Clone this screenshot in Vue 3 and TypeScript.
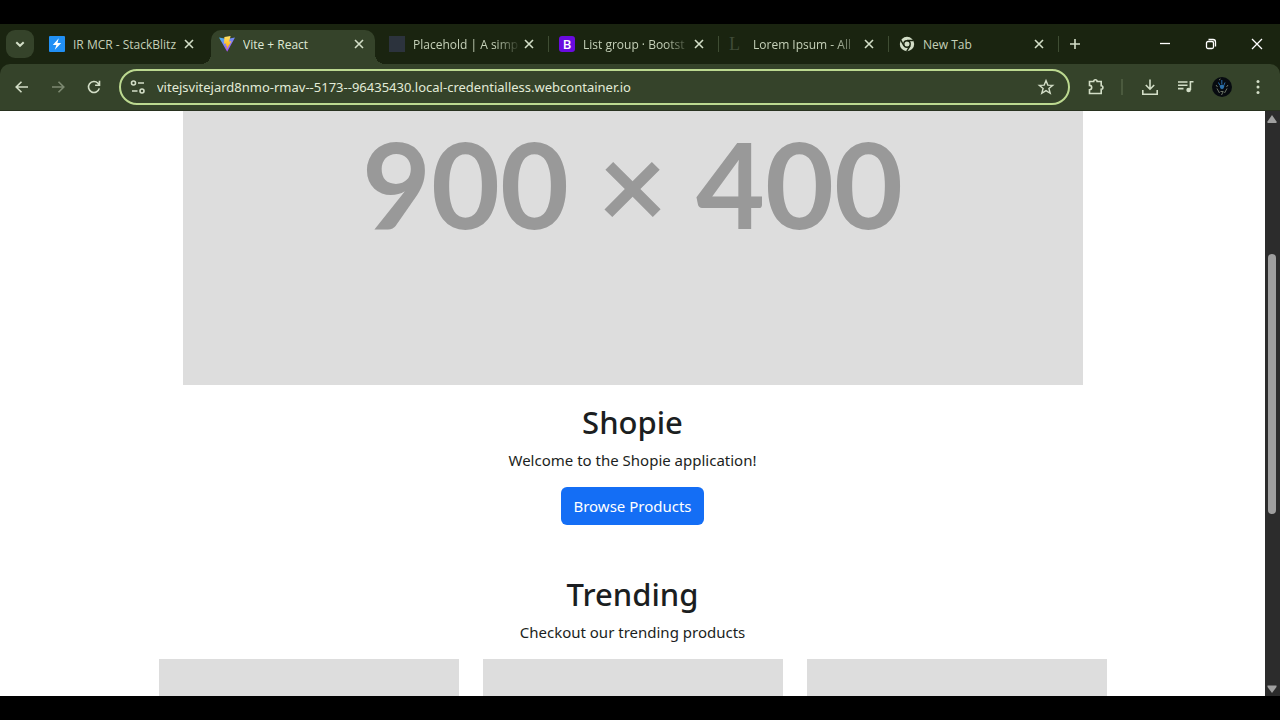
<script setup lang="ts">
import { ref } from 'vue'

interface Tab {
  title: string
  icon: 'bolt' | 'vite' | 'square' | 'bootstrap' | 'lorem' | 'chrome'
  active?: boolean
  divider?: boolean
  faded?: boolean
}

const tabs: Tab[] = [
  { title: 'IR MCR - StackBlitz', icon: 'bolt' },
  { title: 'Vite + React', icon: 'vite', active: true },
  { title: 'Placehold | A simp', icon: 'square', divider: true, faded: true },
  { title: 'List group · Bootst', icon: 'bootstrap', divider: true, faded: true },
  { title: 'Lorem Ipsum - All', icon: 'lorem', divider: true, faded: true },
  { title: 'New Tab', icon: 'chrome', divider: true },
]

const address = ref('vitejsvitejard8nmo-rmav--5173--96435430.local-credentialless.webcontainer.io')
const cards = [1, 2, 3]
</script>

<template>
  <div class="screen">
    <div class="browser">
      <header class="tabstrip">
        <button class="tab-search" aria-label="Search tabs">
          <svg width="16" height="16" viewBox="0 0 16 16"><path d="M4.3 6.2 8 9.8l3.7-3.6" class="line bold" /></svg>
        </button>
        <div class="tabs" role="tablist">
          <div v-for="tab in tabs" :key="tab.title" class="tab" :class="{ active: tab.active, divider: tab.divider }" role="tab" :aria-selected="!!tab.active">
            <svg v-if="tab.icon === 'bolt'" class="fav" viewBox="0 0 16 16">
              <rect width="16" height="16" rx="1" fill="#2190f5" />
              <path d="M9.8 2.2 3.8 9h3.6l-1.6 4.8L12.2 7H8.4z" fill="#fff" />
            </svg>
            <svg v-else-if="tab.icon === 'vite'" class="fav" viewBox="0 0 16 16">
              <defs>
                <linearGradient id="vite-body" x1="0" y1="0" x2="0.6" y2="1">
                  <stop offset="0" stop-color="#41b8f5" />
                  <stop offset="1" stop-color="#b14cf5" />
                </linearGradient>
                <linearGradient id="vite-bolt" x1="0" y1="0" x2="0" y2="1">
                  <stop offset="0" stop-color="#ffe46a" />
                  <stop offset="1" stop-color="#ffa800" />
                </linearGradient>
              </defs>
              <path d="M0 1.6 8 3l8-1.4L8.2 15.8z" fill="url(#vite-body)" />
              <path d="M11.6 0 5.4 1.1 5 7.8l2.2-.4-.6 2.6 1.5-.4-.6 3.8L12.5 5.2l-2.4.4L11.6 0z" fill="url(#vite-bolt)" />
            </svg>
            <svg v-else-if="tab.icon === 'square'" class="fav" viewBox="0 0 16 16"><rect width="16" height="16" fill="#2c333d" /></svg>
            <span v-else-if="tab.icon === 'bootstrap'" class="fav bs">B</span>
            <span v-else-if="tab.icon === 'lorem'" class="fav lorem">L</span>
            <svg v-else class="fav" viewBox="0 0 16 16">
              <circle cx="8" cy="8" r="7.2" fill="#d3dec7" />
              <circle cx="8" cy="8" r="3.2" fill="#d3dec7" stroke="#1a2410" stroke-width="1.4" />
              <path d="M8 4.5h6.4M5 9.8 1.8 4.2M11 9.8l-3.2 5.4" stroke="#1a2410" stroke-width="1.4" />
            </svg>
            <span class="title" :class="{ faded: tab.faded }">{{ tab.title }}</span>
            <button class="close" aria-label="Close tab">
              <svg width="16" height="16" viewBox="0 0 16 16"><path d="m4 4 8 8M12 4l-8 8" class="line" /></svg>
            </button>
          </div>
        </div>
        <button class="new-tab" aria-label="New tab">
          <svg width="16" height="16" viewBox="0 0 16 16"><path d="M8 3v10M3 8h10" class="line" /></svg>
        </button>
        <div class="window-controls">
          <button aria-label="Minimize"><svg width="16" height="16" viewBox="0 0 16 16"><path d="M3 7.5h10" class="white" /></svg></button>
          <button aria-label="Restore">
            <svg width="16" height="16" viewBox="0 0 16 16">
              <rect x="3.5" y="5.5" width="7" height="7" rx="1.5" class="white" />
              <path d="M5.5 3.5H10a2.5 2.5 0 0 1 2.5 2.5v4.5" class="white" />
            </svg>
          </button>
          <button aria-label="Close"><svg width="16" height="16" viewBox="0 0 16 16"><path d="m3 3 10 10M13 3 3 13" class="white" /></svg></button>
        </div>
      </header>

      <div class="toolbar">
        <button class="tool" aria-label="Back"><svg width="18" height="18" viewBox="0 0 18 18"><path d="M15 9H3.5M8.5 3.7 3.2 9l5.3 5.3" class="line" /></svg></button>
        <button class="tool dim" aria-label="Forward" disabled><svg width="18" height="18" viewBox="0 0 18 18"><path d="M3 9h11.5M9.5 3.7 14.8 9l-5.3 5.3" class="line" /></svg></button>
        <button class="tool" aria-label="Reload">
          <svg width="18" height="18" viewBox="0 0 18 18"><path d="M14.3 10.4A5.5 5.5 0 1 1 13 5.2L14.3 6.7M14.5 2.8v4.4h-4.4" class="line" /></svg>
        </button>
        <div class="omnibox">
          <svg width="18" height="18" viewBox="0 0 18 18" aria-hidden="true">
            <circle cx="4.5" cy="5" r="2" class="line" /><path d="M9 5h6M3 13h5.5" class="line" /><circle cx="13" cy="13" r="2" class="line" />
          </svg>
          <input v-model="address" type="text" aria-label="Address and search bar" spellcheck="false" />
          <button class="star" aria-label="Bookmark this tab">
            <svg width="18" height="18" viewBox="0 0 18 18"><path d="m9 2.6 1.8 4.5 4.9.3-3.8 3.1 1.3 4.8L9 12.6l-4.2 2.7 1.3-4.8-3.8-3.1 4.9-.3z" class="line thin" /></svg>
          </button>
        </div>
        <button class="tool" aria-label="Extensions">
          <svg width="18" height="18" viewBox="0 0 18 18"><path d="M2.5 3.5h4.2a1.7 1.7 0 0 1 3.4 0h4.1v4.3a1.7 1.7 0 0 1 0 3.4v4.3H2.5v-3.7a2.2 2.2 0 0 0 0-4.4z" class="line" /></svg>
        </button>
        <span class="separator"></span>
        <button class="tool" aria-label="Downloads">
          <svg width="18" height="18" viewBox="0 0 18 18"><path d="M9 1.5v9.3M4.8 7 9 11.2 13.2 7M1.8 12v4.2h14.4V12" class="line" /></svg>
        </button>
        <button class="tool" aria-label="Media controls">
          <svg width="18" height="18" viewBox="0 0 18 18"><path d="M1 4h9.5M1 7.3h9.5M1 10.6h5.5M13.4 12V3.7h3.1" class="line" /><circle cx="11.6" cy="12" r="2.3" fill="#d3dec7" /></svg>
        </button>
        <button class="tool" aria-label="Profile">
          <svg width="20" height="20" viewBox="0 0 20 20">
            <circle cx="10" cy="10" r="10" fill="#070b10" />
            <path d="M9.8 3v4M6.5 5.5l1.2 2.5M13 5.5l-1 2.5" stroke="#286ba8" fill="none" />
            <path d="M7.5 8.6 10 7.5l2.5 1.1-.8 2.6-1.7 1-1.7-1z" fill="#2b6fa8" />
            <path d="M5 11.5 7.5 16M15 11.5 12.5 16M8.5 14.5h3M9.5 18l1.5-3M4 8l1.5 2M16 8l-1.5 2M7 3l1.5-1" stroke="#6d7566" fill="none" />
          </svg>
        </button>
        <button class="tool" aria-label="Menu">
          <svg width="18" height="18" viewBox="0 0 18 18" fill="#d3dec7"><circle cx="9" cy="3.6" r="1.5" /><circle cx="9" cy="9" r="1.5" /><circle cx="9" cy="14.4" r="1.5" /></svg>
        </button>
      </div>

      <div class="viewport">
        <main class="page">
          <div class="hero" role="img" aria-label="900 × 400">900 × 400</div>
          <section class="intro">
            <h2>Shopie</h2>
            <p>Welcome to the Shopie application!</p>
            <button class="primary">Browse Products</button>
          </section>
          <section class="trending">
            <h2>Trending</h2>
            <p>Checkout our trending products</p>
            <div class="cards"><div v-for="card in cards" :key="card" class="card"></div></div>
          </section>
        </main>
        <div class="scrollbar" aria-hidden="true">
          <svg width="15" height="16" viewBox="0 0 15 16"><path d="M7 4 11.5 10.5v1.5h-9v-1.5z" /></svg>
          <div class="track"><div class="thumb"></div></div>
          <svg width="15" height="16" viewBox="0 0 15 16"><path d="M7 13 2.5 7V5.5h9V7z" /></svg>
        </div>
      </div>
    </div>
  </div>
</template>

<style>
body {
  margin: 0;
  background: #000;
}
</style>

<style scoped>
.screen {
  box-sizing: border-box;
  height: 100vh;
  padding: 24px 0;
  background: #000;
  font-family: 'Noto Sans', 'Open Sans', sans-serif;
  overflow: hidden;
}
.browser {
  display: flex;
  flex-direction: column;
  height: 100%;
  background: #1a2410;
}
button {
  display: inline-flex;
  align-items: center;
  justify-content: center;
  flex: none;
  padding: 0;
  border: 0;
  background: none;
  font: inherit;
}
svg {
  flex: none;
}
.line {
  fill: none;
  stroke: #d3dec7;
  stroke-width: 1.6;
}
.bold {
  stroke-width: 2;
}
.thin {
  stroke-width: 1.4;
}
.white {
  fill: none;
  stroke: #fff;
  stroke-width: 1.3;
}
.tabstrip {
  display: flex;
  align-items: center;
  height: 40px;
  padding-left: 6px;
}
.tab-search {
  width: 28px;
  height: 28px;
  border-radius: 9px;
  background: #35432a;
}
.tabs {
  display: flex;
  gap: 6px;
  align-self: stretch;
  min-width: 0;
  margin-left: 7px;
}
.tab {
  position: relative;
  display: flex;
  align-items: center;
  box-sizing: border-box;
  flex: 0 1 164px;
  width: 164px;
  min-width: 0;
  margin-top: 6px;
  padding: 0 8px 6px;
  color: #c5d0b8;
  font-family: 'Open Sans', 'Noto Sans', sans-serif;
  font-size: 12px;
}
.active {
  border-radius: 10px 10px 0 0;
  background: #35432a;
  color: #dfe8d5;
}
.active::before,
.active::after {
  content: '';
  position: absolute;
  bottom: 0;
  width: 10px;
  height: 10px;
}
.active::before {
  right: 100%;
  background: radial-gradient(circle at 0 0, transparent 10px, #35432a 10px);
}
.active::after {
  left: 100%;
  background: radial-gradient(circle at 100% 0, transparent 10px, #35432a 10px);
}
.divider::after {
  content: '';
  position: absolute;
  top: 6px;
  right: -4px;
  width: 1px;
  height: 16px;
  background: #3f4d33;
}
.fav {
  flex: none;
  width: 16px;
  height: 16px;
  margin-right: 8px;
}
.bs {
  border-radius: 3px;
  background: #6a0be0;
  color: #fff;
  font-size: 13px;
  font-weight: 600;
  line-height: 16px;
  text-align: center;
}
.lorem {
  color: #3f4a37;
  font-family: 'Liberation Serif', serif;
  font-size: 18px;
  line-height: 16px;
}
.title {
  flex: 1;
  min-width: 0;
  overflow: hidden;
  white-space: nowrap;
}
.faded {
  mask-image: linear-gradient(to right, #000 76%, transparent);
}
.close {
  width: 16px;
  height: 16px;
}
.new-tab {
  width: 28px;
  height: 28px;
  margin-left: 6px;
}
.window-controls {
  display: flex;
  align-self: stretch;
  margin-left: auto;
}
.window-controls button {
  width: 46px;
}
.toolbar {
  display: flex;
  align-items: center;
  box-sizing: border-box;
  height: 47px;
  padding: 0 4px;
  border-bottom: 1px solid #28321f;
  border-radius: 10px 10px 0 0;
  background: #35432a;
}
.tool {
  width: 36px;
  height: 36px;
}
.dim {
  opacity: 0.45;
}
.omnibox {
  display: flex;
  align-items: center;
  box-sizing: border-box;
  flex: 1;
  min-width: 0;
  height: 36px;
  margin: 0 8px 0 7px;
  padding: 0 13px 0 8px;
  border: 2px solid #bcd990;
  border-radius: 18px;
}
.omnibox input {
  flex: 1;
  min-width: 0;
  margin-left: 10px;
  padding: 0;
  border: 0;
  outline: 0;
  background: none;
  color: #e2ebd8;
  font: inherit;
  font-size: 13px;
}
.separator {
  width: 2px;
  height: 16px;
  margin: 0 9px 0 7px;
  background: #4b5a3e;
}
.viewport {
  display: flex;
  flex: 1;
  min-height: 0;
  background: #fff;
}
.page {
  flex: 1;
  min-width: 0;
  overflow: hidden;
  color: #1b1e21;
  font-size: 15px;
  line-height: 24px;
  text-align: center;
}
.hero {
  max-width: 900px;
  height: 400px;
  margin: -126px auto 0;
  background: #ddd;
  color: #999;
  font-family: Lato, sans-serif;
  font-size: 119px;
  font-weight: 700;
  line-height: 396px;
  white-space: nowrap;
}
h2 {
  margin: 0 0 7px;
  font-size: 31px;
  font-weight: 500;
  line-height: 38px;
}
p {
  margin: 0 0 15px;
}
.intro {
  padding: 18px 0 50px;
}
.primary {
  height: 38px;
  padding: 0 12px;
  border-radius: 6px;
  background: #146ef5;
  color: #fff;
}
.cards {
  display: grid;
  grid-template-columns: repeat(3, 1fr);
  gap: 24px;
  max-width: 948px;
  margin: 0 auto;
}
.card {
  height: 300px;
  background: #ddd;
}
.scrollbar {
  display: flex;
  flex-direction: column;
  width: 15px;
  background: #2c2c2c;
}
.scrollbar path {
  fill: #a0a0a0;
}
.track {
  display: grid;
  flex: 1;
  grid-template-rows: 23fr 47fr 30fr;
  padding: 0 4px 0 3px;
}
.thumb {
  grid-row: 2;
  border-radius: 4px;
  background: #9f9f9f;
}
</style>
